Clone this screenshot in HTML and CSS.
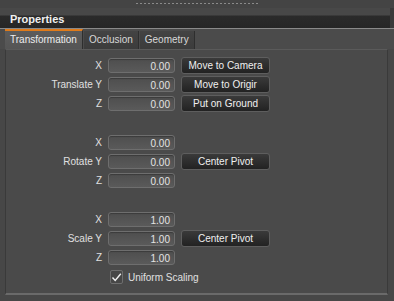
FILE: index.html
```html
<!DOCTYPE html>
<html lang="en">
<head>
  <meta charset="UTF-8">
  <title>Properties</title>
  <link rel="stylesheet" href="styles.css">
</head>
<body>

  <!-- Dock grip -->
  <div class="grip-bar"><span class="grip"></span></div>

  <div class="header">Properties</div>

  <!-- Tabs -->
  <div class="tabs">
    <div class="tab active">Transformation</div>
    <div class="tab">Occlusion</div>
    <div class="tab">Geometry</div>
  </div>

  <div class="panel">

    <!-- Translate -->
    <div class="group">
      <span class="label">X</span>
      <span class="field">0.00</span>
      <button class="btn">Move to Camera</button>

      <span class="label">Translate Y</span>
      <span class="field">0.00</span>
      <button class="btn">Move to Origir</button>

      <span class="label">Z</span>
      <span class="field">0.00</span>
      <button class="btn">Put on Ground</button>
    </div>

    <!-- Rotate -->
    <div class="group">
      <span class="label">X</span>
      <span class="field">0.00</span>
      <span></span>

      <span class="label">Rotate Y</span>
      <span class="field">0.00</span>
      <button class="btn">Center Pivot</button>

      <span class="label">Z</span>
      <span class="field">0.00</span>
      <span></span>
    </div>

    <!-- Scale -->
    <div class="group">
      <span class="label">X</span>
      <span class="field">1.00</span>
      <span></span>

      <span class="label">Scale Y</span>
      <span class="field">1.00</span>
      <button class="btn">Center Pivot</button>

      <span class="label">Z</span>
      <span class="field">1.00</span>
      <span></span>
    </div>

    <label class="check">
      <span class="box">
        <svg width="11" height="11" viewBox="0 0 11 11"><path d="M1.5 5.5 L4.2 8.5 L9.8 1.8" fill="none" stroke="#f2f2f2" stroke-width="1.4"/></svg>
      </span>
      Uniform Scaling
    </label>

  </div>

</body>
</html>
```

FILE: styles.css
```css
/* General */
body {
  margin: 0;
  width: 394px;
  height: 301px;
  overflow: hidden;
  background-color: #474747;
  font-family: "Liberation Sans", Arial, sans-serif;
  font-size: 10px;
  color: #dcdcdc;
}

/* Grip bar on top */
.grip-bar {
  height: 8px;
  background-color: #444;
  display: flex;
  justify-content: center;
}

.grip {
  width: 124px;
  height: 3px;
  margin-top: 2px;
  background-image: radial-gradient(circle, #8a8a8a 0.8px, transparent 1.1px);
  background-size: 4px 3px;
}

/* Header */
.header {
  height: 20px;
  line-height: 22px;
  padding-left: 10px;
  font-size: 11px;
  font-weight: bold;
  color: #f0f0f0;
  background: linear-gradient(#484848 0, #484848 7px, #2b2b2b 8px, #262626 100%);
  box-shadow: inset -4px 0 0 #3a3a3a;
}

/* Tabs */
.tabs {
  display: flex;
  height: 20px;
  padding-left: 5px;
  border-top: 1px solid #8a8a8a;
  background-color: #4b4b4b;
}

.tab {
  padding: 0 5px;
  margin-right: 1px;
  margin-top: 2px;
  line-height: 18px;
  color: #d8d8d8;
  background: linear-gradient(#434343, #3c3c3c);
  border-right: 1px solid #2e2e2e;
}

.tab.active {
  margin-top: 0;
  padding: 0 5px;
  color: #eee;
  background: linear-gradient(#5c5c5c, #555);
  border-top: 2px solid #e07b1a;
}

/* Content panel */
.panel {
  margin: 0 6px 0 5px;
  height: 246px;
  padding-top: 7px;
  box-sizing: border-box;
  background-color: #4a4a4a;
  border: 1px solid #3a3a3a;
  border-top-color: #5a5a5a;
  border-bottom: 2px solid #6a6a6a;
}

.group {
  display: grid;
  grid-template-columns: 96px 67px 89px;
  grid-auto-rows: 16px;
  column-gap: 6px;
  row-gap: 3px;
  align-items: center;
  margin-bottom: 23px;
}

.label {
  text-align: right;
  color: #e0e0e0;
}

.field {
  height: 15px;
  line-height: 15px;
  box-sizing: border-box;
  padding-right: 4px;
  text-align: right;
  color: #e4e4e4;
  background: linear-gradient(#4e4e4e, #5a5a5a);
  border: 1px solid #6e6e6e;
  border-radius: 3px;
  box-shadow: inset 0 1px 1px rgba(0, 0, 0, 0.25);
}

.btn {
  height: 17px;
  padding: 0;
  font-family: inherit;
  font-size: 10px;
  color: #f0f0f0;
  background: linear-gradient(#3a3a3a, #222);
  border: 1px solid #5e5e5e;
  border-radius: 3px;
}

.check {
  display: flex;
  align-items: center;
  gap: 5px;
  margin-top: -18px;
  margin-left: 104px;
  color: #e0e0e0;
}

.box {
  width: 11px;
  height: 12px;
  border: 1px solid #6e6e6e;
  border-radius: 2px;
  background-color: #474747;
  display: flex;
  align-items: center;
  justify-content: center;
}
```
